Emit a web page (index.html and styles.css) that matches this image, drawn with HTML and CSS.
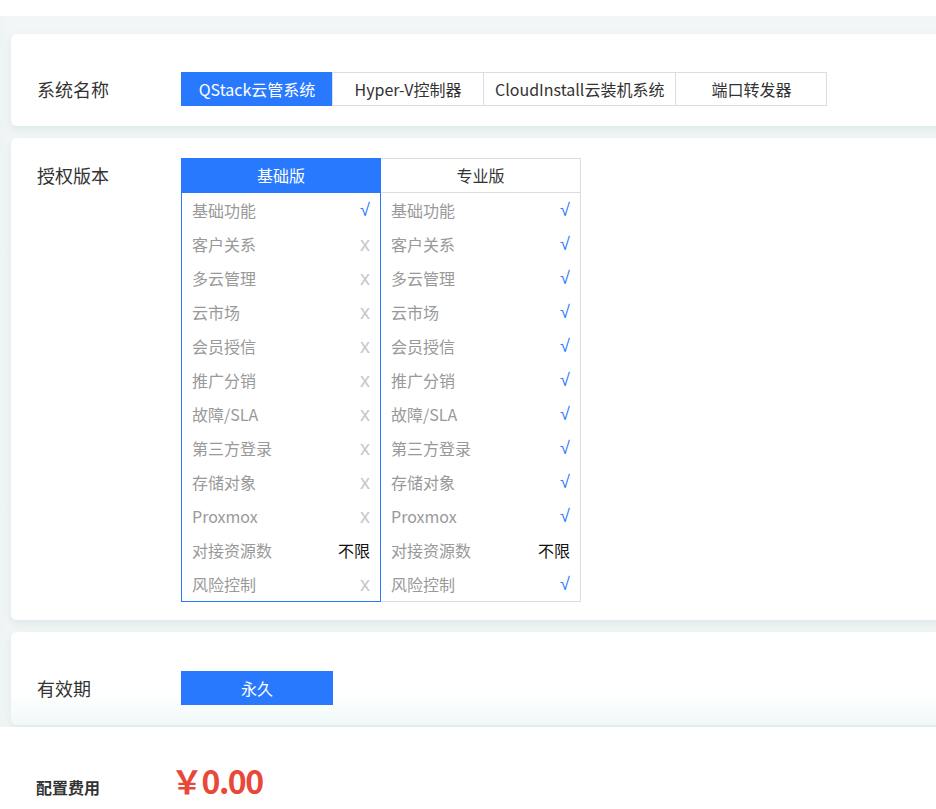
FILE: index.html
```html
<!DOCTYPE html>
<html lang="zh-CN">
<head>
    <meta charset="UTF-8">
    <meta name="viewport" content="width=device-width, initial-scale=1.0">
    <title>配置选择</title>
    <link rel="stylesheet" href="styles.css">
</head>
<body>
    <div class="config-wrap">
        <!-- 系统名称 -->
        <div class="card card-system">
            <div class="field-label">系统名称</div>
            <div class="tabs">
                <span class="tab active">QStack云管系统</span>
                <span class="tab">Hyper-V控制器</span>
                <span class="tab">CloudInstall云装机系统</span>
                <span class="tab">端口转发器</span>
            </div>
        </div>

        <!-- 授权版本 -->
        <div class="card card-license">
            <div class="field-label">授权版本</div>
            <div class="plans">
                <div class="plan active">
                    <div class="plan-head">基础版</div>
                    <div class="plan-row"><span>基础功能</span><span class="yes">√</span></div>
                    <div class="plan-row"><span>客户关系</span><span class="no">x</span></div>
                    <div class="plan-row"><span>多云管理</span><span class="no">x</span></div>
                    <div class="plan-row"><span>云市场</span><span class="no">x</span></div>
                    <div class="plan-row"><span>会员授信</span><span class="no">x</span></div>
                    <div class="plan-row"><span>推广分销</span><span class="no">x</span></div>
                    <div class="plan-row"><span>故障/SLA</span><span class="no">x</span></div>
                    <div class="plan-row"><span>第三方登录</span><span class="no">x</span></div>
                    <div class="plan-row"><span>存储对象</span><span class="no">x</span></div>
                    <div class="plan-row"><span>Proxmox</span><span class="no">x</span></div>
                    <div class="plan-row"><span>对接资源数</span><span class="limit">不限</span></div>
                    <div class="plan-row"><span>风险控制</span><span class="no">x</span></div>
                </div>
                <div class="plan">
                    <div class="plan-head">专业版</div>
                    <div class="plan-row"><span>基础功能</span><span class="yes">√</span></div>
                    <div class="plan-row"><span>客户关系</span><span class="yes">√</span></div>
                    <div class="plan-row"><span>多云管理</span><span class="yes">√</span></div>
                    <div class="plan-row"><span>云市场</span><span class="yes">√</span></div>
                    <div class="plan-row"><span>会员授信</span><span class="yes">√</span></div>
                    <div class="plan-row"><span>推广分销</span><span class="yes">√</span></div>
                    <div class="plan-row"><span>故障/SLA</span><span class="yes">√</span></div>
                    <div class="plan-row"><span>第三方登录</span><span class="yes">√</span></div>
                    <div class="plan-row"><span>存储对象</span><span class="yes">√</span></div>
                    <div class="plan-row"><span>Proxmox</span><span class="yes">√</span></div>
                    <div class="plan-row"><span>对接资源数</span><span class="limit">不限</span></div>
                    <div class="plan-row"><span>风险控制</span><span class="yes">√</span></div>
                </div>
            </div>
        </div>

        <!-- 有效期 -->
        <div class="card card-period">
            <div class="field-label">有效期</div>
            <div class="tabs">
                <span class="tab active">永久</span>
            </div>
        </div>
    </div>

    <div class="price-bar">
        <div class="price-label">配置费用</div>
        <div class="price">￥0.00</div>
    </div>
</body>
</html>
```

FILE: styles.css
```css
body {
    margin: 0;
    padding-top: 16px;
    font-family: "Noto Sans CJK SC", "Noto Sans", sans-serif;
    font-size: 16px;
    color: #333;
    background: #fff;
    overflow-x: hidden;
}

.config-wrap {
    background: linear-gradient(to right, #eef4f4 0, #f3f6f6 12px, #f3f6f6 100%);
    padding: 18px 0 2px 11px;
    overflow: hidden;
}

.card {
    display: flex;
    align-items: flex-start;
    background: #fff;
    border-radius: 6px;
    margin-right: -12px;
    margin-bottom: 12px;
    padding-left: 26px;
    box-shadow: 0 4px 8px rgba(150, 200, 200, 0.25);
}

.card-system {
    padding-top: 38px;
    padding-bottom: 20px;
}

.card-license {
    padding-top: 20px;
    padding-bottom: 18px;
}

.card-period {
    padding-top: 39px;
    padding-bottom: 20px;
    margin-bottom: 0;
    background: linear-gradient(to bottom, #fff 65%, #f0f8f8 100%);
}

.field-label {
    width: 144px;
    flex-shrink: 0;
    line-height: 34px;
    font-size: 18px;
    color: #333;
}

/* 选项按钮 */
.tabs {
    display: flex;
}

.tab {
    min-width: 152px;
    box-sizing: border-box;
    height: 34px;
    line-height: 32px;
    padding: 0 11px;
    text-align: center;
    border: 1px solid #ddd;
    margin-left: -1px;
    color: #333;
    font-size: 16px;
    background: #fff;
}

.tab:first-child {
    margin-left: 0;
}

.tab.active {
    background: #2979ff;
    border-color: #2979ff;
    color: #fff;
}

/* 版本对比表 */
.plans {
    display: flex;
}

.plan {
    width: 200px;
    box-sizing: border-box;
    border: 1px solid #ddd;
    border-left: none;
}

.plan.active {
    border: 1px solid #2979ff;
}

.plan-head {
    height: 34px;
    line-height: 33px;
    box-sizing: border-box;
    text-align: center;
    border-bottom: 1px solid #ddd;
    color: #333;
}

.plan.active .plan-head {
    background: #2979ff;
    color: #fff;
    margin: -1px -1px 0;
    height: 35px;
    line-height: 35px;
    border-bottom: none;
}

.plan-row {
    display: flex;
    justify-content: space-between;
    align-items: center;
    height: 34px;
    padding: 0 10px;
    color: #999;
}

.plan-row .yes {
    color: #2979ff;
    font-family: "Liberation Sans", sans-serif;
    font-size: 18px;
}

.plan-row .no {
    color: #c8c8c8;
    font-family: "Liberation Sans", sans-serif;
    font-size: 20px;
}

.plan-row .limit {
    color: #111;
}

/* 费用 */
.price-bar {
    display: flex;
    align-items: baseline;
    padding: 30px 0 0 36px;
}

.price-label {
    width: 135px;
    font-weight: bold;
    color: #333;
}

.price {
    font-size: 32px;
    font-weight: bold;
    color: #e8473a;
    letter-spacing: -1.5px;
}
```
